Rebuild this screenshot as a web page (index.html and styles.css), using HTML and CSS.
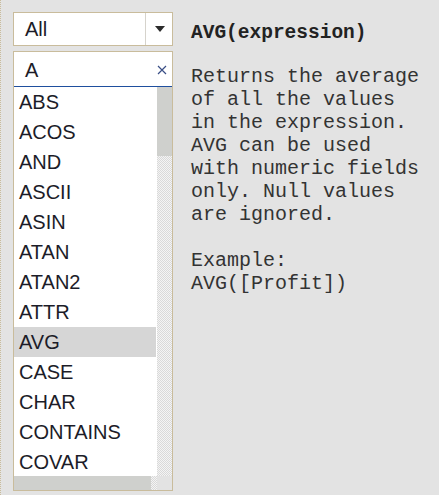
FILE: index.html
```html
<!DOCTYPE html>
<html>
<head>
<meta charset="utf-8">
<link rel="stylesheet" href="styles.css">
</head>
<body>
<div class="page">
  <div class="left">
    <div class="select">
      <div class="select-value">All</div>
      <div class="select-btn">
        <svg width="10" height="6" viewBox="0 0 10 6"><path d="M0 0H10L5 6Z" fill="#2b2b2b"/></svg>
      </div>
    </div>
    <div class="panel">
      <div class="search">
        <span class="search-text">A</span>
        <svg class="clear" width="10" height="10" viewBox="0 0 10 10"><path d="M1 1L9 9M9 1L1 9" stroke="#3a4f86" stroke-width="1.2"/></svg>
      </div>
      <div class="listwrap">
        <ul class="list">
          <li>ABS</li>
          <li>ACOS</li>
          <li>AND</li>
          <li>ASCII</li>
          <li>ASIN</li>
          <li>ATAN</li>
          <li>ATAN2</li>
          <li>ATTR</li>
          <li class="sel">AVG</li>
          <li>CASE</li>
          <li>CHAR</li>
          <li>CONTAINS</li>
          <li>COVAR</li>
        </ul>
        <div class="vscroll"><div class="vthumb"></div></div>
        <div class="hscroll"><div class="hthumb"></div></div>
        <div class="corner"></div>
      </div>
    </div>
  </div>
  <div class="right">
    <div class="title">AVG(expression)</div>
    <div class="desc">Returns the average
of all the values
in the expression.
AVG can be used
with numeric fields
only. Null values
are ignored.

Example:
AVG([Profit])</div>
  </div>
</div>
</body>
</html>
```

FILE: styles.css
```css
html, body {
  margin: 0;
  padding: 0;
}
body {
  width: 439px;
  height: 495px;
  background: #e3e3e3;
  border-left: 1px dotted #c9bc9c;
  box-sizing: border-box;
  overflow: hidden;
}
.page {
  display: flex;
  padding: 12px 0 0 12px;
  gap: 18px;
}
.left {
  width: 160px;
  display: flex;
  flex-direction: column;
  gap: 5px;
  font-family: "Liberation Sans", Arial, sans-serif;
  font-size: 20px;
  color: #1c1c28;
}
.select {
  height: 34px;
  box-sizing: border-box;
  border: 1px solid #c9bc9c;
  background: #fff;
  display: flex;
}
.select-value {
  flex: 1;
  padding-left: 11px;
  line-height: 32px;
  border-right: 1px solid #d6d3cc;
}
.select-btn {
  width: 25px;
  display: flex;
  align-items: center;
  justify-content: center;
  padding-left: 1px;
}
.panel {
  border: 1px solid #c9bc9c;
  background: #fff;
  display: flex;
  flex-direction: column;
}
.search {
  height: 34px;
  border-bottom: 1px solid #1f4f9e;
  display: flex;
  align-items: center;
  justify-content: space-between;
  padding: 0 5px 0 11px;
}
.search-text {
  line-height: 34px;
  padding-top: 2px;
}
.clear {
  margin-top: 2px;
}
.listwrap {
  display: grid;
  grid-template-columns: 143px 15px;
  grid-template-rows: 389px 14px;
}
.list {
  list-style: none;
  margin: 0;
  padding: 0;
  overflow: hidden;
}
.list li {
  height: 30px;
  line-height: 30px;
  padding-left: 5px;
  white-space: nowrap;
}
.list li.sel {
  background: #d6d6d6;
  margin-right: 1px;
}
.vscroll {
  background: repeating-conic-gradient(#f4f4f4 0 25%, #d9d9d9 0 50%) 0 0 / 2px 2px;
}
.vthumb {
  height: 69px;
  background: #cfd0cd;
}
.hscroll {
  background: repeating-conic-gradient(#f4f4f4 0 25%, #d9d9d9 0 50%) 0 0 / 2px 2px;
}
.hthumb {
  width: 137px;
  height: 100%;
  background: #cfd0cd;
}
.corner {
  background: #e3e3e3;
}
.right {
  font-family: "Liberation Mono", "Courier New", monospace;
  font-size: 20px;
  color: #333;
  padding-top: 10px;
}
.title {
  font-weight: bold;
  font-size: 19.5px;
  line-height: 23px;
  color: #222;
}
.desc {
  margin-top: 20px;
  line-height: 23px;
  white-space: pre;
}
```
